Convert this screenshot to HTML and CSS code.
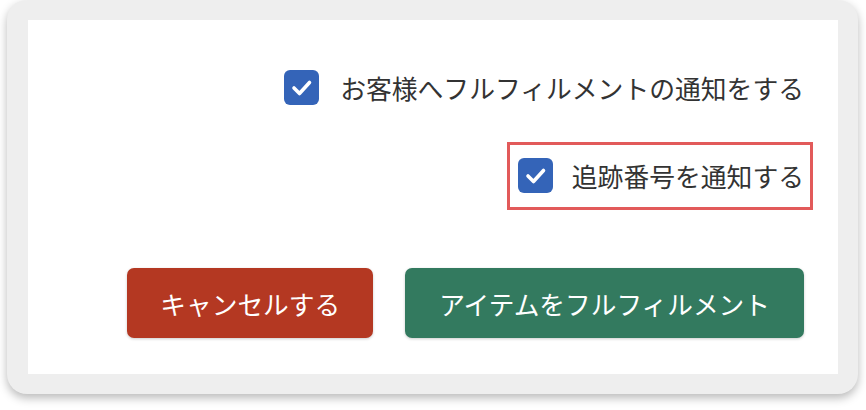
FILE: index.html
```html
<!DOCTYPE html>
<html lang="ja">
<head>
<meta charset="utf-8">
<link rel="stylesheet" href="styles.css">
</head>
<body>
<div class="frame">
  <div class="panel">
    <label class="option">
      <span class="check"><svg viewBox="0 0 35 35" width="35" height="35"><path d="M10 18 L15.5 23.5 L25.5 12.5" fill="none" stroke="#fff" stroke-width="3.6" stroke-linecap="round" stroke-linejoin="round"/></svg></span>
      <span class="label-text">お客様へフルフィルメントの通知をする</span>
    </label>
    <label class="option highlighted">
      <span class="check"><svg viewBox="0 0 35 35" width="35" height="35"><path d="M10 18 L15.5 23.5 L25.5 12.5" fill="none" stroke="#fff" stroke-width="3.6" stroke-linecap="round" stroke-linejoin="round"/></svg></span>
      <span class="label-text">追跡番号を通知する</span>
    </label>
    <div class="actions">
      <button class="btn btn-cancel">キャンセルする</button>
      <button class="btn btn-fulfill">アイテムをフルフィルメント</button>
    </div>
  </div>
</div>
</body>
</html>
```
FILE: styles.css
```css
html, body {
  margin: 0;
  padding: 0;
  background: #fff;
}
body {
  min-height: 410px;
  font-family: "Noto Sans CJK JP", "Noto Sans", sans-serif;
  color: #333;
}
.frame {
  margin-left: 7px;
  width: 851px;
  height: 394px;
  box-sizing: border-box;
  padding: 20px 20px 20px 21px;
  background: #eeeeee;
  border-radius: 20px;
  box-shadow: 0 4px 10px rgba(0, 0, 0, 0.28);
}
.panel {
  background: #fff;
  height: 100%;
  box-sizing: border-box;
  padding: 50px 34px 0 0;
  display: flex;
  flex-direction: column;
  align-items: flex-end;
}
.option {
  display: flex;
  align-items: center;
  gap: 21px;
  height: 35px;
  font-size: 25.8px;
  line-height: 35px;
  white-space: nowrap;
}
.check {
  width: 35px;
  height: 35px;
  border-radius: 6px;
  background: #3464b8;
  display: flex;
}
.highlighted {
  box-sizing: content-box;
  margin-top: 37px;
  margin-right: -9px;
  padding: 13px 6px 14px 8px;
  gap: 19px;
  border: 3px solid #e25a5a;
}
.actions {
  margin-top: 58px;
  display: flex;
  gap: 32px;
}
.btn {
  height: 70px;
  border: none;
  border-radius: 7px;
  font-family: "Noto Sans CJK JP", "Noto Sans", sans-serif;
  font-size: 25.7px;
  font-weight: 400;
  color: #fff;
  box-shadow: 0 1px 3px rgba(0, 0, 0, 0.2);
}
.btn-cancel {
  padding: 0 33px;
  background: #b43822;
}
.btn-fulfill {
  padding: 0 34px;
  background: #337a5f;
}
```
